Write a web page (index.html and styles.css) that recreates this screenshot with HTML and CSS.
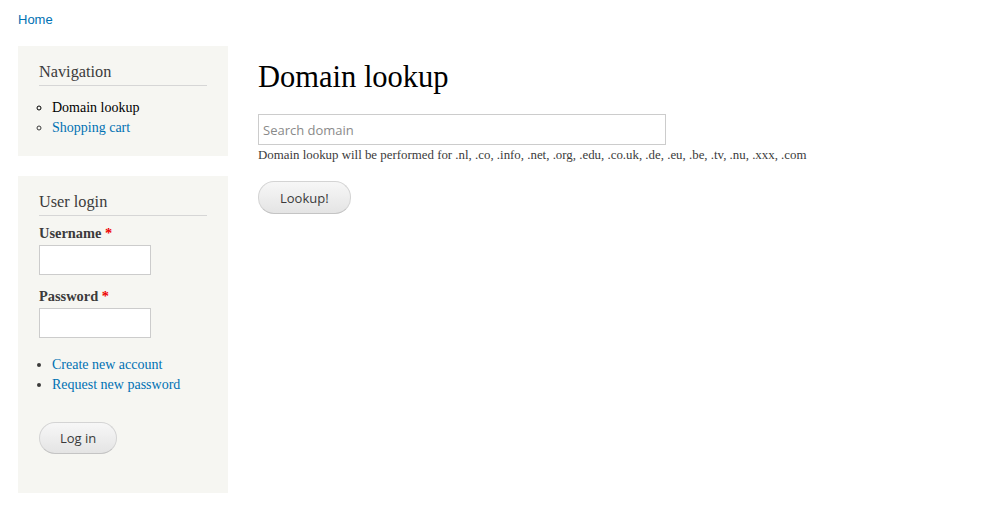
FILE: index.html
```html
<!DOCTYPE html>
<html lang="en">
<head>
<meta charset="utf-8">
<title>Domain lookup</title>
<link rel="stylesheet" href="styles.css">
</head>
<body>
<div class="breadcrumb"><a href="#">Home</a></div>
<div class="layout">
  <aside class="sidebar">
    <section class="block nav-block">
      <h2 class="block-title">Navigation</h2>
      <ul class="menu">
        <li class="active">Domain lookup</li>
        <li><a href="#">Shopping cart</a></li>
      </ul>
    </section>
    <section class="block login-block">
      <h2 class="block-title">User login</h2>
      <form class="login-form">
        <div class="form-item">
          <label class="form-label">Username <span class="req">*</span></label>
          <input class="form-text small" type="text">
        </div>
        <div class="form-item">
          <label class="form-label">Password <span class="req">*</span></label>
          <input class="form-text small" type="password">
        </div>
        <ul class="links">
          <li><a href="#">Create new account</a></li>
          <li><a href="#">Request new password</a></li>
        </ul>
        <button class="btn" type="button">Log in</button>
      </form>
    </section>
  </aside>
  <main class="content">
    <h1 class="title">Domain lookup</h1>
    <form class="lookup-form">
      <input class="form-text wide" type="text" placeholder="Search domain">
      <div class="description">Domain lookup will be performed for .nl, .co, .info, .net, .org, .edu, .co.uk, .de, .eu, .be, .tv, .nu, .xxx, .com</div>
      <button class="btn" type="button">Lookup!</button>
    </form>
  </main>
</div>
</body>
</html>
```

FILE: styles.css
```css
body {
  margin: 0;
  background: #fff;
  color: #3b3b3b;
  font-family: "Liberation Serif", Georgia, serif;
  font-size: 14px;
}
a {
  color: #0071b3;
  text-decoration: none;
}
.breadcrumb {
  padding: 12px 18px 0;
  height: 46px;
  box-sizing: border-box;
  font-family: "Liberation Sans", Arial, sans-serif;
  font-size: 13px;
  line-height: 15px;
}
.layout {
  display: flex;
  gap: 30px;
  padding: 0 18px;
  align-items: flex-start;
}
.sidebar {
  width: 210px;
  flex: none;
  display: flex;
  flex-direction: column;
  gap: 20px;
}
.block {
  background: #f6f6f2;
  padding: 17px 21px;
}
.block-title {
  margin: 0;
  font-weight: normal;
  font-size: 16.3px;
  line-height: 18px;
  color: #3b3b3b;
  padding-bottom: 4px;
  border-bottom: 1px solid #d6d6d6;
}
.menu {
  margin: 12px 0 1px;
  padding-left: 13px;
  list-style: circle;
  line-height: 20px;
}
.menu .active {
  color: #000;
}
.login-form {
  margin: 7px 0 22px;
}
.form-item {
  margin-bottom: 11px;
}
.form-label {
  display: block;
  font-weight: bold;
  font-size: 14.4px;
  line-height: 20px;
  margin-bottom: 2px;
}
.req {
  color: #e00;
}
.form-text {
  display: block;
  box-sizing: border-box;
  border: 1px solid #ccc;
  background: #fff;
  margin: 0;
  padding: 4px 4px;
  font-family: "Open Sans", sans-serif;
  font-size: 13px;
}
.form-text.small {
  width: 112px;
  height: 30px;
}
.form-text.wide {
  width: 408px;
  height: 31px;
}
.form-text::placeholder {
  color: #8a8a8a;
}
.links {
  margin: 17px 0 27px;
  padding-left: 13px;
  list-style: disc;
  line-height: 20px;
}
.btn {
  display: block;
  box-sizing: border-box;
  height: 32px;
  padding: 0 21px;
  border: 1px solid #d4d4d4;
  border-bottom-color: #c4c4c4;
  border-radius: 16px;
  background: linear-gradient(#f7f7f7, #e4e4e4);
  color: #3a3a3a;
  font-family: "Open Sans", sans-serif;
  font-size: 13px;
}
.login-form .btn {
  padding: 0 20px;
}
.content {
  flex: 1;
}
.title {
  margin: 13px 0 19px;
  font-weight: normal;
  font-size: 30.5px;
  line-height: 36px;
  color: #000;
}
.lookup-form .btn {
  height: 33px;
}
.description {
  font-size: 12.88px;
  line-height: 20px;
  margin-bottom: 16px;
}
```
